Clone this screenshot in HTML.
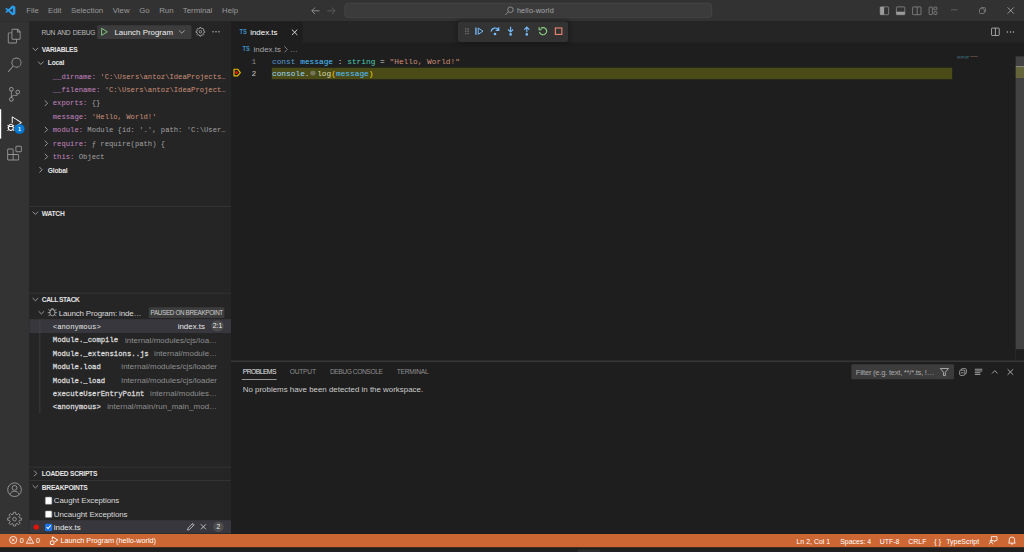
<!DOCTYPE html>
<html><head><meta charset="utf-8"><title>index.ts - hello-world - Visual Studio Code</title>
<style>
*{box-sizing:border-box;margin:0;padding:0}
html,body{width:1024px;height:552px;overflow:hidden;background:#1f1f1f}
body{font-family:"Liberation Sans",sans-serif;font-size:13px;color:#ccc}
#root{position:absolute;left:0;top:0;width:1707px;height:920px;transform:scale(.6);transform-origin:0 0;background:#1f1f1f;overflow:hidden}
.abs{position:absolute}
.mono{font-family:"Liberation Mono",monospace}
svg{display:block;overflow:visible}
#title{left:0;top:0;width:1707px;height:35.55px;background:#323233;color:#9a9a9a}
#title .m{position:absolute;top:0;line-height:35.5px;font-size:13px;white-space:nowrap}
#cc{left:573.6px;top:4.8px;width:613.6px;height:25.6px;border:1.5px solid #4c4c4d;border-radius:6.5px;background:#3b3b3c}
#act{left:0;top:35.55px;width:48.6px;height:854px;background:#333333}
#side{left:48.6px;top:35.55px;width:336.2px;height:854px;background:#252526}
.hdr{position:absolute;left:0;width:336.2px;height:22.35px;line-height:23.4px;font-size:11.17px;font-weight:bold;color:#e4e4e4;padding-left:21px;border-top:1.6px solid #3e3e3f;letter-spacing:-0.45px;white-space:nowrap}
.row{position:absolute;left:0;width:336.2px;height:22.35px;line-height:24.4px;font-size:13.2px;white-space:nowrap;overflow:hidden}
.vn{color:#c586c0}.vs{color:#ce9178}.vv{color:#a3a3a3}
.var{font-family:"Liberation Mono",monospace;font-size:12px;white-space:pre}
.tw{position:absolute;top:4px}
.sn{font-family:"Liberation Mono",monospace;font-size:12.12px;font-weight:normal;-webkit-text-stroke:0.45px #d8d8d8;color:#d8d8d8;position:absolute;left:39.4px;top:0.9px;white-space:pre}
.sf{position:absolute;right:23px;color:#8f8f8f;font-size:13.2px;letter-spacing:0.1px;white-space:pre}
#status{left:0;top:889.5px;width:1707px;height:22.35px;background:#cc6633;color:#fff;font-size:12.19px;line-height:23.6px}
#status span{position:absolute;top:0;white-space:nowrap}
#editor{left:384.8px;top:35.55px;width:1322.2px;height:854px;background:#1e1e1e}
.code{position:absolute;left:68.5px;font-family:"Liberation Mono",monospace;font-size:13.05px;line-height:19.3px;height:19.3px;white-space:pre}
.ln{position:absolute;width:40px;text-align:right;left:0;font-family:"Liberation Mono",monospace;font-size:13.05px;line-height:19.3px;color:#858585}
.ptab{position:absolute;top:0;height:35.55px;line-height:35.55px;font-size:11.17px;color:#8e8e8e;white-space:nowrap}
</style></head><body><div id="root">
<div id="title" class="abs">
<svg class="abs" style="left:9.2px;top:9.4px" width="16.6" height="16.6" viewBox="0 0 100 100"><path d="M70.9119 99.3171C72.4869 99.9307 74.2828 99.8914 75.8725 99.1264L96.4608 89.2197C98.6242 88.1787 100 85.9892 100 83.5872V16.4133C100 14.0113 98.6243 11.8218 96.4609 10.7808L75.8725 0.873756C73.7862 -0.130129 71.3446 0.11576 69.5135 1.44695C69.252 1.63711 69.0028 1.84943 68.769 2.08341L29.3551 38.0415L12.1872 25.0096C10.589 23.7965 8.35363 23.8959 6.86933 25.2461L1.36303 30.2549C-0.452552 31.9064 -0.454633 34.7627 1.35853 36.417L16.2471 50.0001L1.35853 63.5832C-0.454633 65.2374 -0.452552 68.0938 1.36303 69.7453L6.86933 74.7541C8.35363 76.1043 10.589 76.2037 12.1872 74.9905L29.3551 61.9587L68.769 97.9167C69.3925 98.5406 70.1246 99.0104 70.9119 99.3171ZM75.0152 27.2989L45.1091 50.0001L75.0152 72.7012V27.2989Z" fill="#2a9cf0" fill-rule="evenodd"/></svg>
<span class="m" style="left:43.7px">File</span>
<span class="m" style="left:80px">Edit</span>
<span class="m" style="left:118.3px">Selection</span>
<span class="m" style="left:188px">View</span>
<span class="m" style="left:232px">Go</span>
<span class="m" style="left:265.3px">Run</span>
<span class="m" style="left:304.7px">Terminal</span>
<span class="m" style="left:370px">Help</span>
<svg class="abs" style="left:518px;top:10px" width="16" height="16" viewBox="0 0 16 16"><path d="M14.5 8 H1.8 M7 2.6 L1.6 8 L7 13.4" fill="none" stroke="#9a9a9a" stroke-width="1.45"/></svg>
<svg class="abs" style="left:544px;top:10px" width="16" height="16" viewBox="0 0 16 16"><path d="M1.5 8 H14.2 M9 2.6 L14.4 8 L9 13.4" fill="none" stroke="#606060" stroke-width="1.45"/></svg>
<div id="cc" class="abs"></div>
<svg class="abs" style="left:841px;top:10px" width="16" height="16" viewBox="0 0 16 16"><g fill="none" stroke="#9a9a9a" stroke-width="1.45"><circle cx="9.7" cy="6.2" r="4.6"/><path d="M6.4 9.6 L1.2 14.8"/></g></svg>
<span class="m" style="left:861.5px;font-size:12px;color:#a8a8a8;letter-spacing:0.32px">hello-world</span>
<svg class="abs" style="left:1466.3px;top:9.6px" width="16" height="16" viewBox="0 0 16 16"><rect x="1" y="1.5" width="14" height="13" rx="1" fill="none" stroke="#9c9c9c" stroke-width="1.1"/><rect x="1" y="1.5" width="6.5" height="13" fill="#9c9c9c"/></svg>
<svg class="abs" style="left:1493px;top:9.6px" width="16" height="16" viewBox="0 0 16 16"><rect x="1" y="1.5" width="14" height="13" rx="1" fill="none" stroke="#9c9c9c" stroke-width="1.1"/><rect x="1" y="9.5" width="14" height="5" fill="#9c9c9c"/></svg>
<svg class="abs" style="left:1519.5px;top:9.6px" width="16" height="16" viewBox="0 0 16 16"><rect x="1" y="1.5" width="14" height="13" rx="1" fill="none" stroke="#9c9c9c" stroke-width="1.1"/><path d="M8.7 1.5 V14.5" stroke="#9c9c9c" stroke-width="1.1"/></svg>
<svg class="abs" style="left:1546.8px;top:9.6px" width="16" height="16" viewBox="0 0 16 16"><g fill="none" stroke="#9c9c9c" stroke-width="1.1"><rect x="1.5" y="1.8" width="5.5" height="12.4" rx="1"/><rect x="9.5" y="1.8" width="5" height="4.5" rx="1"/><rect x="9.5" y="9.5" width="5" height="4.5" rx="1"/></g></svg>
<div class="abs" style="left:1585px;top:16.2px;width:10.7px;height:1.1px;background:#7c7c7c"></div>
<svg class="abs" style="left:1632.2px;top:12.3px" width="11" height="11" viewBox="0 0 11 11"><g fill="none" stroke="#9a9a9a" stroke-width="1"><rect x="0.5" y="2.5" width="8" height="8" rx="1.6"/><path d="M2.6 2.4 V2 a1.5 1.5 0 0 1 1.5-1.5 H8.5 a2 2 0 0 1 2 2 V7 a1.5 1.5 0 0 1-1.5 1.5 H8.6"/></g></svg>
<svg class="abs" style="left:1679px;top:12.3px" width="11" height="11" viewBox="0 0 11 11"><path d="M0.3 0.3 L10.7 10.7 M10.7 0.3 L0.3 10.7" fill="none" stroke="#cfcfcf" stroke-width="1.1"/></svg>
</div>
<div id="act" class="abs">
<svg class="abs" style="left:12.10px;top:12.18px" width="24.4" height="24.4" viewBox="0 0 24 24"><path d="M17.5 0h-9L7 1.5V6H2.5L1 7.5v15.07L2.5 24h12.07L16 22.57V18h4.7l1.3-1.43V4.5L17.5 0zm0 2.12l2.38 2.38H17.5V2.12zm-3 20.38h-12v-15H7v9.07L8.5 18h6v4.5zm6-6h-12v-15H16V6h4.5v10.5z" fill="#939393"/></svg>
<svg class="abs" style="left:12.10px;top:60.94px" width="24.4" height="24.4" viewBox="0 0 24 24"><path d="M15.25 0a8.25 8.25 0 0 0-6.18 13.72L1 22.88l1.12 1 8.05-9.12A8.251 8.251 0 1 0 15.25.01V0zm0 15a6.75 6.75 0 1 1 0-13.5 6.75 6.75 0 0 1 0 13.5z" fill="#939393"/></svg>
<svg class="abs" style="left:12.10px;top:109.70px" width="24.4" height="24.4" viewBox="0 0 24 24"><path d="M21.007 8.222A3.738 3.738 0 0 0 15.045 5.2a3.737 3.737 0 0 0 1.156 6.583 2.988 2.988 0 0 1-2.668 1.67h-2.99a4.456 4.456 0 0 0-2.989 1.165V7.4a3.737 3.737 0 1 0-1.494 0v9.117a3.776 3.776 0 1 0 1.816.099 2.99 2.99 0 0 1 2.668-1.667h2.99a4.484 4.484 0 0 0 4.223-3.039 3.736 3.736 0 0 0 3.25-3.687zM4.565 3.738a2.242 2.242 0 1 1 4.484 0 2.242 2.242 0 0 1-4.484 0zm4.484 16.441a2.242 2.242 0 1 1-4.484 0 2.242 2.242 0 0 1 4.484 0zm8.221-9.715a2.242 2.242 0 1 1 0-4.485 2.242 2.242 0 0 1 0 4.485z" fill="#939393"/></svg>
<div class="abs" style="left:0;top:146.3px;width:2.2px;height:48.76px;background:#fff"></div>
<svg class="abs" style="left:12.10px;top:158.46px" width="24.4" height="24.4" viewBox="0 0 24 24"><path d="M10.94 13.5l-1.32 1.32a3.73 3.73 0 0 0-7.24 0L1.06 13.5 0 14.56l1.72 1.72-.22.22V18H0v1.5h1.5v.08c.077.489.214.966.41 1.42L0 22.94 1.06 24l1.65-1.65A4.308 4.308 0 0 0 6 24a4.31 4.31 0 0 0 3.29-1.65L10.94 24 12 22.94 10.09 21c.198-.464.336-.951.41-1.45v-.1H12V18h-1.5v-1.5l-.22-.22L12 14.56l-1.06-1.06zM6 13.5a2.25 2.25 0 0 1 2.25 2.25h-4.5A2.25 2.25 0 0 1 6 13.5zm3 6a3.33 3.33 0 0 1-3 3 3.33 3.33 0 0 1-3-3v-2.250h6v2.250zm14.760-9.900v1.260L13.500 17.370V15.600l8.500-5.370L9 2v9.460a5.070 5.070 0 0 0-1.500-.720V.630L8.640 0l15.120 9.600z" fill="#fff"/></svg>
<div class="abs" style="left:24.2px;top:171.2px;width:16.4px;height:16.4px;border-radius:9px;background:#0078d4;color:#fff;font-size:9px;font-weight:bold;text-align:center;line-height:17px">1</div>
<svg class="abs" style="left:12.10px;top:207.22px" width="24.4" height="24.4" viewBox="0 0 24 24"><path d="M13.5 1.5L15 0h7.5L24 1.5V9l-1.5 1.5H15L13.5 9V1.5zm1.5 0V9h7.5V1.5H15zM0 15V6l1.5-1.5H9L10.5 6v7.5H18l1.5 1.5v7.5L18 24H1.5L0 22.500V15zm9-1.500V6H1.500v7.500H9zM9 15H1.500v7.500H9V15zm1.500 7.500H18V15h-7.500v7.500z" fill="#939393"/></svg>
<svg class="abs" style="left:12.10px;top:768.66px" width="24.4" height="24.4" viewBox="0 0 24 24"><g fill="none" stroke="#939393" stroke-width="1.6"><circle cx="12" cy="12" r="11.2"/><circle cx="12" cy="9" r="4"/><path d="M4.4 20 C5.6 15.4 9 14.6 12 14.6 C15 14.6 18.4 15.4 19.6 20"/></g></svg>
<svg class="abs" style="left:12.10px;top:817.42px" width="24.4" height="24.4" viewBox="0 0 24 24"><g fill="none" stroke="#939393" stroke-width="1.6" stroke-linejoin="round"><circle cx="12" cy="12" r="3"/><path d="M9.87 3.98 L10.22 0.74 L13.78 0.74 L14.13 3.98 L16.17 4.82 L18.70 2.78 L21.22 5.30 L19.18 7.83 L20.02 9.87 L23.26 10.22 L23.26 13.78 L20.02 14.13 L19.18 16.17 L21.22 18.70 L18.70 21.22 L16.17 19.18 L14.13 20.02 L13.78 23.26 L10.22 23.26 L9.87 20.02 L7.83 19.18 L5.30 21.22 L2.78 18.70 L4.82 16.17 L3.98 14.13 L0.74 13.78 L0.74 10.22 L3.98 9.87 L4.82 7.83 L2.78 5.30 L5.30 2.78 L7.83 4.82 Z"/></g></svg>
</div>
<div id="side" class="abs">
<div class="abs" style="left:20.6px;top:0;height:35.55px;line-height:37.9px;font-size:11.17px;color:#bbbbbb;letter-spacing:-0.5px;word-spacing:1.4px;white-space:nowrap">RUN AND DEBUG</div>
<div class="abs" style="left:113.2px;top:6.3px;width:157.7px;height:23.2px;background:#3c3c3c;border-radius:2px"></div>
<svg class="abs" style="left:117.5px;top:9.8px" width="16" height="16" viewBox="0 0 16 16"><path d="M3.4 2.2 L12.8 8 L3.4 13.8 Z" fill="none" stroke="#89d185" stroke-width="1.5" stroke-linejoin="round"/></svg>
<div class="abs" style="left:142.2px;top:0;height:35.55px;line-height:35.55px;font-size:13.2px;color:#f0f0f0;white-space:nowrap">Launch Program</div>
<svg class="abs" style="left:246.9px;top:9.8px" width="16" height="16" viewBox="0 0 16 16"><path d="M3.2 5.6 L8 10.4 L12.8 5.6" fill="none" stroke="#c5c5c5" stroke-width="1.2"/></svg>
<svg class="abs" style="left:277.2px;top:9.9px" width="16" height="16" viewBox="0 0 16 16"><g fill="none" stroke="#c5c5c5" stroke-width="1.15" stroke-linejoin="round"><path d="M6.63 2.47 L6.97 0.77 L9.03 0.77 L9.37 2.47 L10.94 3.12 L12.38 2.16 L13.84 3.62 L12.88 5.06 L13.53 6.63 L15.23 6.97 L15.23 9.03 L13.53 9.37 L12.88 10.94 L13.84 12.38 L12.38 13.84 L10.94 12.88 L9.37 13.53 L9.03 15.23 L6.97 15.23 L6.63 13.53 L5.06 12.88 L3.62 13.84 L2.16 12.38 L3.12 10.94 L2.47 9.37 L0.77 9.03 L0.77 6.97 L2.47 6.63 L3.12 5.06 L2.16 3.62 L3.62 2.16 L5.06 3.12 Z"/><circle cx="8" cy="8" r="2.1"/></g></svg>
<svg class="abs" style="left:303.9px;top:9.9px" width="16" height="16" viewBox="0 0 16 16"><circle cx="3" cy="8" r="1.15" fill="#c5c5c5"/><circle cx="8" cy="8" r="1.15" fill="#c5c5c5"/><circle cx="13" cy="8" r="1.15" fill="#c5c5c5"/></svg>
<div class="hdr" style="top:35.55px;border-top:none"><svg class="abs" style="left:2.4000000000000004px;top:3.2px;" width="16" height="16" viewBox="0 0 16 16"><path d="M3.4 5.7 L8 10.3 L12.6 5.7" fill="none" stroke="#c5c5c5" stroke-width="1.2"/></svg>VARIABLES</div>
<div class="row" style="top:57.90px"><svg class="abs" style="left:11.7px;top:3.2px;" width="16" height="16" viewBox="0 0 16 16"><path d="M3.4 5.7 L8 10.3 L12.6 5.7" fill="none" stroke="#c5c5c5" stroke-width="1.2"/></svg><span class="abs" style="left:31.2px;font-size:11.17px;font-weight:bold;color:#e4e4e4;letter-spacing:-0.4px">Local</span></div>
<div class="row" style="top:80.25px"><span class="var abs" style="left:39.4px"><span class="vn">__dirname:</span> <span class="vs">'C:\Users\antoz\IdeaProjects…</span></span></div>
<div class="row" style="top:102.60px"><span class="var abs" style="left:39.4px"><span class="vn">__filename:</span> <span class="vs">'C:\Users\antoz\IdeaProject…</span></span></div>
<div class="row" style="top:124.95px"><svg class="abs" style="left:20px;top:3.2px;" width="16" height="16" viewBox="0 0 16 16"><path d="M5.7 3.4 L10.3 8 L5.7 12.6" fill="none" stroke="#c5c5c5" stroke-width="1.2"/></svg><span class="var abs" style="left:39.4px"><span class="vn">exports:</span> <span class="vv">{}</span></span></div>
<div class="row" style="top:147.30px"><span class="var abs" style="left:39.4px"><span class="vn">message:</span> <span class="vs">'Hello, World!'</span></span></div>
<div class="row" style="top:169.65px"><svg class="abs" style="left:20px;top:3.2px;" width="16" height="16" viewBox="0 0 16 16"><path d="M5.7 3.4 L10.3 8 L5.7 12.6" fill="none" stroke="#c5c5c5" stroke-width="1.2"/></svg><span class="var abs" style="left:39.4px"><span class="vn">module:</span> <span class="vv">Module {id: '.', path: 'C:\User…</span></span></div>
<div class="row" style="top:192.00px"><svg class="abs" style="left:20px;top:3.2px;" width="16" height="16" viewBox="0 0 16 16"><path d="M5.7 3.4 L10.3 8 L5.7 12.6" fill="none" stroke="#c5c5c5" stroke-width="1.2"/></svg><span class="var abs" style="left:39.4px"><span class="vn">require:</span> <span class="vv">ƒ require(path) {</span></span></div>
<div class="row" style="top:214.35px"><svg class="abs" style="left:20px;top:3.2px;" width="16" height="16" viewBox="0 0 16 16"><path d="M5.7 3.4 L10.3 8 L5.7 12.6" fill="none" stroke="#c5c5c5" stroke-width="1.2"/></svg><span class="var abs" style="left:39.4px"><span class="vn">this:</span> <span class="vv">Object</span></span></div>
<div class="row" style="top:236.70px"><svg class="abs" style="left:11.7px;top:3.2px;" width="16" height="16" viewBox="0 0 16 16"><path d="M5.7 3.4 L10.3 8 L5.7 12.6" fill="none" stroke="#c5c5c5" stroke-width="1.2"/></svg><span class="abs" style="left:31.2px;font-size:11.17px;font-weight:bold;color:#e4e4e4;letter-spacing:-0.4px">Global</span></div>
<div class="hdr" style="top:308px"><svg class="abs" style="left:2.4000000000000004px;top:2.2px;" width="16" height="16" viewBox="0 0 16 16"><path d="M3.4 5.7 L8 10.3 L12.6 5.7" fill="none" stroke="#c5c5c5" stroke-width="1.2"/></svg>WATCH</div>
<div class="hdr" style="letter-spacing:-0.75px;top:452.4px"><svg class="abs" style="left:2.4000000000000004px;top:2.2px;" width="16" height="16" viewBox="0 0 16 16"><path d="M3.4 5.7 L8 10.3 L12.6 5.7" fill="none" stroke="#c5c5c5" stroke-width="1.2"/></svg>CALL STACK</div>
<div class="row" style="top:474.35px"><svg class="abs" style="left:12px;top:3.2px;" width="16" height="16" viewBox="0 0 16 16"><path d="M3.4 5.7 L8 10.3 L12.6 5.7" fill="none" stroke="#c5c5c5" stroke-width="1.2"/></svg><svg class="abs" style="left:29.4px;top:1.2px" width="18.6" height="18.6" viewBox="0 0 16 16"><g fill="none" stroke="#c5c5c5" stroke-width="1.05"><rect x="4.6" y="4.2" width="6.8" height="9" rx="3.4"/><path d="M5.8 4.4 A2.3 2.3 0 0 1 10.2 4.4"/><path d="M4.6 8.7H1.4M11.4 8.7h3.2M4.8 6.2 L2.4 3.8M11.2 6.2 l2.4-2.4M4.8 11.2 l-2.4 2.4M11.2 11.2l2.4 2.4"/></g></svg><span class="abs" style="left:49.4px;color:#dcdcdc;letter-spacing:-0.27px">Launch Program: inde…</span><span class="abs" style="left:199.7px;top:2.4px;width:125.9px;height:17.4px;line-height:18px;background:#3d3d3e;border-radius:2px;font-size:10.6px;color:#cdcdcd;text-align:center;letter-spacing:-0.62px">PAUSED ON BREAKPOINT</span></div>
<div class="row" style="top:496.70px;background:#37373d"><span class="sn" style="-webkit-text-stroke:0;color:#e6e6e6">&lt;anonymous&gt;</span><span class="abs" style="left:247.6px;color:#e6e6e6">index.ts</span><span class="abs" style="left:303.2px;top:2.2px;width:21.4px;height:18px;line-height:19.6px;border-radius:9px;background:#4d4d4d;color:#f0f0f0;font-size:11.17px;text-align:center">2:1</span></div>
<div class="row" style="top:519.05px"><span class="sn">Module._compile</span><span class="sf">internal/modules/cjs/loa…</span></div>
<div class="row" style="top:541.40px"><span class="sn">Module._extensions..js</span><span class="sf">internal/module…</span></div>
<div class="row" style="top:563.75px"><span class="sn">Module.load</span><span class="sf">internal/modules/cjs/loader</span></div>
<div class="row" style="top:586.10px"><span class="sn">Module._load</span><span class="sf">internal/modules/cjs/loader</span></div>
<div class="row" style="top:608.45px"><span class="sn">executeUserEntryPoint</span><span class="sf">internal/modules…</span></div>
<div class="row" style="top:630.80px"><span class="sn">&lt;anonymous&gt;</span><span class="sf">internal/main/run_main_mod…</span></div>
<div class="abs" style="left:17.7px;top:496.7px;width:1px;height:156.45000000000002px;background:#4a4a4a"></div>
<div class="hdr" style="top:742.2px"><svg class="abs" style="left:2.4000000000000004px;top:2.2px;" width="16" height="16" viewBox="0 0 16 16"><path d="M5.7 3.4 L10.3 8 L5.7 12.6" fill="none" stroke="#c5c5c5" stroke-width="1.2"/></svg>LOADED SCRIPTS</div>
<div class="hdr" style="top:764.5500000000001px"><svg class="abs" style="left:2.4000000000000004px;top:2.2px;" width="16" height="16" viewBox="0 0 16 16"><path d="M3.4 5.7 L8 10.3 L12.6 5.7" fill="none" stroke="#c5c5c5" stroke-width="1.2"/></svg>BREAKPOINTS</div>
<div class="row" style="top:786.90px"><span class="abs" style="left:26.2px;top:5.9px;width:12.4px;height:12.4px;background:#fff;border-radius:2px;border:1px solid #8a8a8a"></span><span class="abs" style="left:41.2px;color:#dadada;letter-spacing:-0.1px">Caught Exceptions</span></div>
<div class="row" style="top:809.25px"><span class="abs" style="left:26.2px;top:5.9px;width:12.4px;height:12.4px;background:#fff;border-radius:2px;border:1px solid #8a8a8a"></span><span class="abs" style="left:41.2px;color:#dadada;letter-spacing:-0.1px">Uncaught Exceptions</span></div>
<div class="row" style="top:831.60px;background:#37373d"><span class="abs" style="left:7.4px;top:6.7px;width:9px;height:9px;border-radius:5px;background:#e51400"></span><span class="abs" style="left:26.2px;top:5.9px;width:12.4px;height:12.4px;background:#1a73e8;border-radius:2px"></span><svg class="abs" style="left:26.2px;top:4.9px" width="12.4" height="12.4" viewBox="0 0 14 14"><path d="M3 7.2 L5.8 10 L11 3.8" fill="none" stroke="#fff" stroke-width="2"/></svg><span class="abs" style="left:41.2px;color:#e6e6e6;letter-spacing:-0.1px">index.ts</span><svg class="abs" style="left:261.7px;top:3.2px" width="16" height="16" viewBox="0 0 16 16"><path d="M2.5 13.5 L3.4 10.2 L11.2 2.4 L13.6 4.8 L5.8 12.6 Z M9.8 3.8 L12.2 6.2" fill="none" stroke="#cfcfcf" stroke-width="1.3" stroke-linejoin="round"/></svg><svg class="abs" style="left:282.4px;top:3.2px" width="16" height="16" viewBox="0 0 16 16"><path d="M3.8 3.8 L12.2 12.2 M12.2 3.8 L3.8 12.2" fill="none" stroke="#cfcfcf" stroke-width="1.45"/></svg><span class="abs" style="left:306.4px;top:2.2px;width:18px;height:18px;line-height:19.6px;border-radius:9px;background:#4d4d4d;color:#f0f0f0;font-size:11.17px;text-align:center">2</span></div>
</div>
<div id="editor" class="abs">
<div class="abs" style="left:0;top:0;width:1322.2px;height:35.55px;background:#252526"></div>
<div class="abs" style="left:0;top:0;width:120.2px;height:35.55px;background:#1e1e1e"></div>
<span class="abs" style="left:13.9px;top:0;line-height:34.2px;font-size:11.2px;font-weight:bold;color:#3d8fc4;display:inline-block;transform:scaleX(.85);transform-origin:0 50%">TS</span>
<span class="abs" style="left:32.2px;top:0;line-height:35.55px;font-size:13.2px;color:#fff">index.ts</span>
<svg class="abs" style="left:98.6px;top:10px" width="16" height="16" viewBox="0 0 16 16"><path d="M3.5 3.3 L12.5 12.3 M12.5 3.3 L3.5 12.3" fill="none" stroke="#f0f0f0" stroke-width="1.45"/></svg>
<svg class="abs" style="left:1265.9px;top:9.2px" width="16" height="16" viewBox="0 0 16 16"><g fill="none" stroke="#d0d0d0" stroke-width="1.2"><rect x="1.6" y="1.8" width="12.8" height="12.4" rx="1.2"/><path d="M8 1.8 V14.2"/></g></svg>
<svg class="abs" style="left:1291.6px;top:9.2px" width="16" height="16" viewBox="0 0 16 16"><circle cx="3" cy="8.3" r="1.1" fill="#c5c5c5"/><circle cx="8" cy="8.3" r="1.1" fill="#c5c5c5"/><circle cx="13" cy="8.3" r="1.1" fill="#c5c5c5"/></svg>
<span class="abs" style="left:19.7px;top:35.55px;line-height:21.2px;font-size:11.2px;font-weight:bold;color:#3d8fc4;display:inline-block;transform:scaleX(.85);transform-origin:0 50%">TS</span>
<span class="abs" style="left:37.9px;top:35.55px;line-height:22.35px;font-size:13.2px;color:#a6a6a6">index.ts</span>
<svg class="abs" style="left:84.2px;top:38.7px" width="16" height="16" viewBox="0 0 16 16"><path d="M5 3.2 L10 8.3 L5 13.4" fill="none" stroke="#a6a6a6" stroke-width="1.15"/></svg>
<span class="abs" style="left:98.4px;top:35.55px;line-height:22.35px;font-size:13.2px;color:#a6a6a6">…</span>
<div class="abs" style="left:68.3px;top:77.6px;width:1133.6px;height:19.3px;background:#4b4b18"></div>
<div class="ln" style="top:58.3px;width:42.4px">1</div>
<div class="ln" style="top:77.6px;width:42.4px;color:#c6c6c6">2</div>
<div class="code" style="top:58.3px"><span style="color:#569cd6">const</span> <span style="color:#4fc1ff">message</span> <span style="color:#d4d4d4">:</span> <span style="color:#4ec9b0">string</span> <span style="color:#d4d4d4">=</span> <span style="color:#ce9178">"Hello, World!"</span></div>
<div class="code" style="top:77.6px"><span style="color:#9cdcfe">console</span><span style="color:#d4d4d4">.</span><span style="display:inline-block;width:12.6px;height:19.3px;vertical-align:top;position:relative"><span style="position:absolute;left:1.4px;top:4.6px;width:8.4px;height:8.4px;border-radius:5px;background:#75755a"></span></span><span style="color:#dcdcaa">log</span><span style="color:#ffd700">(</span><span style="color:#4fc1ff">message</span><span style="color:#ffd700">)</span></div>
<svg class="abs" style="left:2.4px;top:77.8px" width="16" height="16" viewBox="0 0 16 16"><path d="M3 2.4 H9 L13.6 8 L9 13.6 H3 Z" fill="none" stroke="#e6b800" stroke-width="2" stroke-linejoin="round"/><circle cx="7.2" cy="8" r="2.4" fill="#f01400"/></svg>
<div class="abs" style="left:1210px;top:58.2px;width:5px;height:1.5px;background:#35587a"></div>
<div class="abs" style="left:1216px;top:58.2px;width:6.5px;height:1.5px;background:#32718f"></div>
<div class="abs" style="left:1224.5px;top:58.2px;width:5.5px;height:1.5px;background:#337367"></div>
<div class="abs" style="left:1232px;top:58.2px;width:13px;height:1.5px;background:#7a5a4a"></div>
<div class="abs" style="left:1210px;top:60.3px;width:7.5px;height:1.5px;background:#5e7d8c"></div>
<div class="abs" style="left:1218.5px;top:60.3px;width:3px;height:1.5px;background:#7c7c5c"></div>
<div class="abs" style="left:1222px;top:60.3px;width:7px;height:1.5px;background:#3f7c9c"></div>
<div class="abs" style="left:1307.5px;top:57px;width:1px;height:510px;background:#2c2c2c"></div>
<div class="abs" style="left:1308.5px;top:58px;width:14px;height:488px;background:#424242"></div>
<div class="abs" style="left:1308.5px;top:75.2px;width:14px;height:19.5px;background:#65653b"></div>
<div class="abs" style="left:1308.5px;top:74px;width:14px;height:1.6px;background:#aeaeae"></div>
<div class="abs" style="left:0;top:565.8px;width:1322.2px;height:1.3px;background:#3f3f3f"></div>
<span class="ptab" style="left:19.8px;top:566.7px;color:#e7e7e7;letter-spacing:-0.85px">PROBLEMS</span>
<span class="ptab" style="left:98px;top:566.7px;color:#8e8e8e;letter-spacing:-0.4px">OUTPUT</span>
<span class="ptab" style="left:165px;top:566.7px;color:#8e8e8e;letter-spacing:-0.75px">DEBUG CONSOLE</span>
<span class="ptab" style="left:276.3px;top:566.7px;color:#8e8e8e;letter-spacing:-0.4px">TERMINAL</span>
<div class="abs" style="left:18px;top:596.4px;width:58.6px;height:1.4px;background:#e7e7e7"></div>
<span class="abs" style="left:19.8px;top:602.3px;line-height:22px;font-size:13.2px;color:#cccccc;white-space:nowrap">No problems have been detected in the workspace.</span>
<div class="abs" style="left:1033.8px;top:571.5px;width:171.2px;height:24.5px;background:#3c3c3c;border-radius:2px"></div>
<span class="abs" style="left:1041.5px;top:571.5px;line-height:29px;font-size:12.7px;color:#a8a8a8;letter-spacing:-0.42px;white-space:nowrap">Filter (e.g. text, **/*.ts, !…</span>
<svg class="abs" style="left:1181.3px;top:576px" width="16" height="16" viewBox="0 0 16 16"><path d="M1.2 2.2 H14.8 L9.6 8.4 V14 H6.4 V8.4 Z" fill="none" stroke="#d0d0d0" stroke-width="1.2" stroke-linejoin="round"/></svg>
<svg class="abs" style="left:1212px;top:576.5px" width="16" height="16" viewBox="0 0 16 16"><g fill="none" stroke="#c5c5c5" stroke-width="1.15"><rect x="2.4" y="5" width="8.6" height="8.6" rx="1.8"/><path d="M5 4.8 V4.2 a1.8 1.8 0 0 1 1.8-1.8 H11.8 a1.8 1.8 0 0 1 1.8 1.8 V9.2 a1.8 1.8 0 0 1-1.8 1.8 H11.2 M4.4 9.3 H9"/></g></svg>
<svg class="abs" style="left:1238.3px;top:576.5px" width="16" height="16" viewBox="0 0 16 16"><path d="M1.8 3.4 H14.2 M1.8 6.3 H14.2 M1.8 9.2 H11 M1.8 12.1 H11" fill="none" stroke="#c5c5c5" stroke-width="1.25"/></svg>
<svg class="abs" style="left:1265.2px;top:576.5px" width="16" height="16" viewBox="0 0 16 16"><path d="M3.4 10.4 L8 5.8 L12.6 10.4" fill="none" stroke="#c5c5c5" stroke-width="1.3"/></svg>
<svg class="abs" style="left:1291.6px;top:576.5px" width="16" height="16" viewBox="0 0 16 16"><path d="M3.4 3.4 L12.6 12.6 M12.6 3.4 L3.4 12.6" fill="none" stroke="#c5c5c5" stroke-width="1.4"/></svg>
<div class="abs" style="left:378.2px;top:0.5px;width:184px;height:34.3px;background:#333333;border-radius:5px;box-shadow:0 0 8px 2px rgba(0,0,0,.36)"></div>
<svg class="abs" style="left:386.6px;top:8.9px" width="16" height="16" viewBox="0 0 16 16"><rect x="4.2" y="3.2" width="2.1" height="2.1" fill="#7c7c7c"/><rect x="4.2" y="7" width="2.1" height="2.1" fill="#7c7c7c"/><rect x="4.2" y="10.8" width="2.1" height="2.1" fill="#7c7c7c"/><rect x="8.3" y="3.2" width="2.1" height="2.1" fill="#7c7c7c"/><rect x="8.3" y="7" width="2.1" height="2.1" fill="#7c7c7c"/><rect x="8.3" y="10.8" width="2.1" height="2.1" fill="#7c7c7c"/></svg>
<svg class="abs" style="left:406.40000000000003px;top:8.7px" width="16" height="16" viewBox="0 0 16 16"><path d="M2.2 2 V14" stroke="#75beff" stroke-width="2.2" fill="none"/><path d="M6 2.8 L14 8 L6 13.2 Z" fill="none" stroke="#75beff" stroke-width="1.6" stroke-linejoin="round"/></svg>
<svg class="abs" style="left:431.90000000000003px;top:8.7px" width="16" height="16" viewBox="0 0 16 16"><path d="M1.6 8.6 A6.6 6.6 0 0 1 14 6.2 M14.2 1.6 V6.6 H9.2" fill="none" stroke="#75beff" stroke-width="2"/><circle cx="8" cy="12.6" r="2.2" fill="#75beff"/></svg>
<svg class="abs" style="left:458.7px;top:8.7px" width="16" height="16" viewBox="0 0 16 16"><path d="M8 0.6 V9 M3.8 5.2 L8 9.4 L12.2 5.2" fill="none" stroke="#75beff" stroke-width="1.9"/><circle cx="8" cy="13.3" r="2.1" fill="#75beff"/></svg>
<svg class="abs" style="left:485.40000000000003px;top:8.7px" width="16" height="16" viewBox="0 0 16 16"><path d="M8 9.8 V1.6 M3.8 5.4 L8 1.2 L12.2 5.4" fill="none" stroke="#75beff" stroke-width="1.9"/><circle cx="8" cy="13.3" r="2.1" fill="#75beff"/></svg>
<svg class="abs" style="left:512.2px;top:8.7px" width="16" height="16" viewBox="0 0 16 16"><path d="M4.2 3.4 A6 6 0 1 1 2.2 9 M1.6 1.4 V5.6 H5.8" fill="none" stroke="#89d185" stroke-width="1.9"/></svg>
<svg class="abs" style="left:538.2px;top:8.7px" width="16" height="16" viewBox="0 0 16 16"><rect x="2.6" y="2.6" width="10.8" height="10.8" fill="none" stroke="#f48771" stroke-width="1.8"/></svg>
</div>
<div id="status" class="abs">
<svg class="abs" style="left:15px;top:3.5px" width="14" height="14" viewBox="0 0 16 16"><g fill="none" stroke="#fff" stroke-width="1.5"><circle cx="8" cy="8" r="6.8"/><path d="M5.3 5.3 L10.7 10.7 M10.7 5.3 L5.3 10.7"/></g></svg>
<span style="left:33px">0</span>
<svg class="abs" style="left:43px;top:3.5px" width="14" height="14" viewBox="0 0 16 16"><g fill="none" stroke="#fff" stroke-width="1.5" stroke-linejoin="round"><path d="M8 1.6 L15 14.2 H1 Z"/><path d="M8 6 V10.4 M8 11.6 V13"/></g></svg>
<span style="left:60px">0</span>
<svg class="abs" style="left:82px;top:3px" width="16" height="16" viewBox="0 0 16 16"><g fill="none" stroke="#fff" stroke-width="1.55" stroke-linejoin="round"><path d="M5.2 6 V1.6 L14.4 7 L9.6 10"/><rect x="2" y="8.6" width="6" height="5.8" rx="1"/></g></svg>
<span style="left:100.8px;letter-spacing:-0.05px">Launch Program (hello-world)</span>
<span style="left:1327.5px;font-size:11.6px">Ln 2, Col 1</span>
<span style="left:1400.3px;font-size:11.6px">Spaces: 4</span>
<span style="left:1466.2px;font-size:11.6px">UTF-8</span>
<span style="left:1513.7px;font-size:11.6px">CRLF</span>
<span style="left:1557px;font-size:11.6px"><span style="position:static;letter-spacing:3.6px">{}</span></span>
<span style="left:1577px;font-size:11.6px">TypeScript</span>
<svg class="abs" style="left:1648px;top:3.5px" width="15" height="15" viewBox="0 0 16 16"><g fill="none" stroke="#fff" stroke-width="1.4" stroke-linejoin="round"><path d="M14.5 1.5 H4.5 V8.5 H8 L10.5 10.8 V8.5 H14.5 Z"/><circle cx="4" cy="9.6" r="1.8"/><path d="M0.8 15 C1 12.4 2.4 12 4 12 C5.6 12 7 12.4 7.2 15"/></g></svg>
<svg class="abs" style="left:1678.5px;top:3.5px" width="15" height="15" viewBox="0 0 16 16"><g fill="none" stroke="#fff" stroke-width="1.5" stroke-linejoin="round"><path d="M3.2 11.6 V7 A4.8 4.8 0 0 1 12.8 7 V11.6 L14 13 H2 Z"/><path d="M6.4 14.6 H9.6"/></g></svg>
</div>
<div class="abs" style="left:961.8px;top:916.2px;width:39px;height:8px;border-radius:4px;background:#2e2e2e"></div>
</div></body></html>
